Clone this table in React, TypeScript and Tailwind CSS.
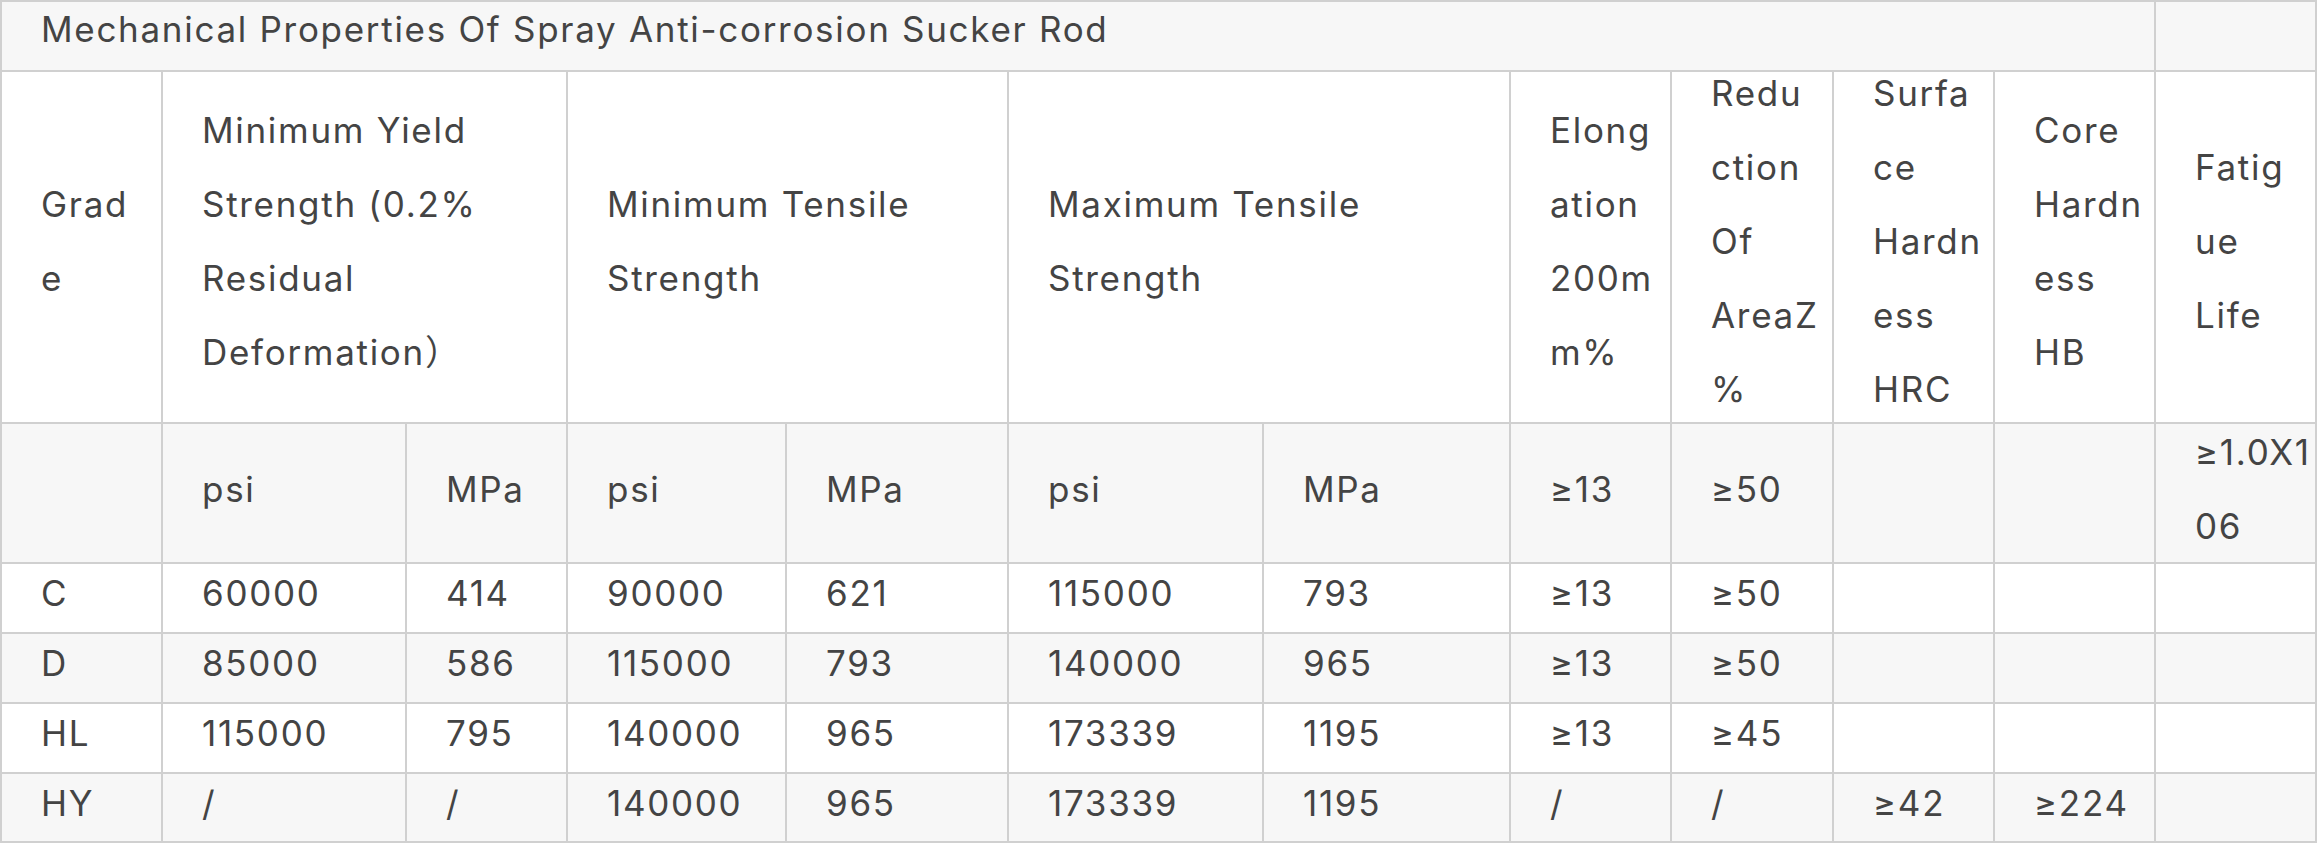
import React from "react";

type Cell = { lines: string[]; span?: number; pb?: string };

const HEADER: Cell[] = [
  { lines: ["Grad", "e"] },
  { lines: ["Minimum Yield", "Strength (0.2%", "Residual", "Deformation）"], span: 2 },
  { lines: ["Minimum Tensile", "Strength"], span: 2 },
  { lines: ["Maximum Tensile", "Strength"], span: 2 },
  { lines: ["Elong", "ation", "200m", "m%"] },
  { lines: ["Redu", "ction", "Of", "AreaZ", "%"] },
  { lines: ["Surfa", "ce", "Hardn", "ess", "HRC"] },
  { lines: ["Core", "Hardn", "ess", "HB"] },
  { lines: ["Fatig", "ue", "Life"] },
];

const UNITS: string[][] = [
  [], ["psi"], ["MPa"], ["psi"], ["MPa"], ["psi"], ["MPa"], ["≥13"], ["≥50"], [], [], ["≥1.0X1", "06"],
];

const ROWS: string[][] = [
  ["C", "60000", "414", "90000", "621", "115000", "793", "≥13", "≥50", "", "", ""],
  ["D", "85000", "586", "115000", "793", "140000", "965", "≥13", "≥50", "", "", ""],
  ["HL", "115000", "795", "140000", "965", "173339", "1195", "≥13", "≥45", "", "", ""],
  ["HY", "/", "/", "140000", "965", "173339", "1195", "/", "/", "≥42", "≥224", ""],
];

function Td({ lines, bg, pb, span = 1 }: { lines: string[]; bg: string; pb: string; span?: number }) {
  const spanCls = span === 2 ? "col-span-2" : span === 11 ? "col-span-11" : "";
  return (
    <div className={`${bg} ${spanCls} flex items-center pl-[39px] ${pb}`}>
      <div className="leading-[74px]">
        {lines.map((l, i) => (
          <div key={i} className="whitespace-nowrap">
            {l}
          </div>
        ))}
      </div>
    </div>
  );
}

export default function App() {
  return (
    <div className="bg-white min-h-screen font-['Inter','Noto_Sans_CJK_SC',sans-serif] text-[35px] tracking-[1.7px] text-[#444]">
      <div className="grid w-fit gap-[2px] p-[2px] bg-[#d0d0d0] grid-cols-[159px_242px_159px_217px_220px_253px_245px_159px_160px_159px_159px_159px] grid-rows-[68px_350px_138px_68px_68px_68px_67px]">
        {/* title */}
        <Td
          lines={["Mechanical Properties Of Spray Anti-corrosion Sucker Rod"]}
          bg="bg-[#f7f7f7]"
          pb="pb-[14px]"
          span={11}
        />
        <div className="bg-[#f7f7f7]" />

        {/* header */}
        {HEADER.map((c, i) => (
          <Td key={i} lines={c.lines} span={c.span} bg="bg-white" pb="pb-[13px]" />
        ))}

        {/* units */}
        {UNITS.map((u, i) => (
          <Td key={i} lines={u} bg="bg-[#f7f7f7]" pb="pb-[9px]" />
        ))}

        {/* data */}
        {ROWS.map((r, ri) =>
          r.map((v, ci) => (
            <Td
              key={`${ri}-${ci}`}
              lines={v ? [v] : []}
              bg={ri % 2 === 0 ? "bg-white" : "bg-[#f7f7f7]"}
              pb="pb-[10px]"
            />
          ))
        )}
      </div>
    </div>
  );
}
